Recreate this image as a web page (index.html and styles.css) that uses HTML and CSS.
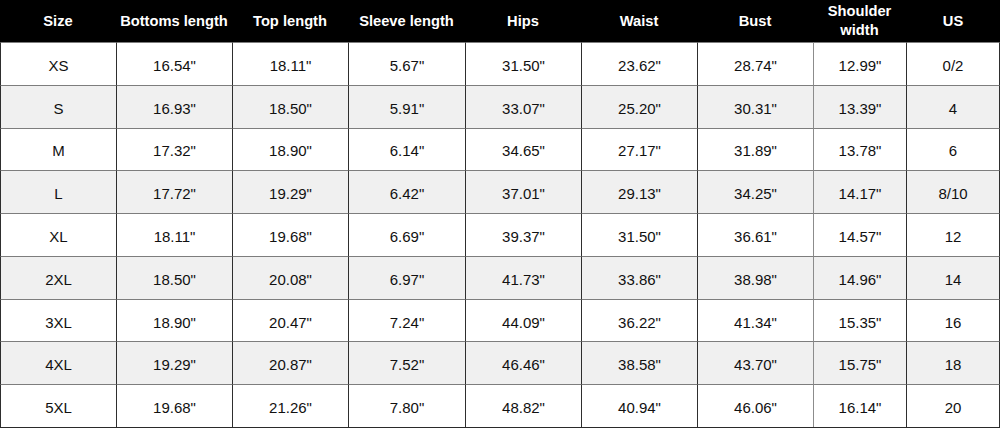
FILE: index.html
```html
<!DOCTYPE html>
<html>
<head>
<meta charset="utf-8">
<link rel="stylesheet" href="styles.css">
</head>
<body>
<div class="chart">
  <div class="hd">Size</div>
  <div class="hd">Bottoms length</div>
  <div class="hd">Top length</div>
  <div class="hd">Sleeve length</div>
  <div class="hd">Hips</div>
  <div class="hd">Waist</div>
  <div class="hd">Bust</div>
  <div class="hd two">Shoulder<br>width</div>
  <div class="hd">US</div>

  <div class="c">XS</div><div class="c">16.54"</div><div class="c">18.11"</div><div class="c">5.67"</div><div class="c">31.50"</div><div class="c">23.62"</div><div class="c">28.74"</div><div class="c g">12.99"</div><div class="c last">0/2</div>
  <div class="c alt">S</div><div class="c alt">16.93"</div><div class="c alt">18.50"</div><div class="c alt">5.91"</div><div class="c alt">33.07"</div><div class="c alt">25.20"</div><div class="c alt">30.31"</div><div class="c alt g">13.39"</div><div class="c alt last">4</div>
  <div class="c">M</div><div class="c">17.32"</div><div class="c">18.90"</div><div class="c">6.14"</div><div class="c">34.65"</div><div class="c">27.17"</div><div class="c">31.89"</div><div class="c g">13.78"</div><div class="c last">6</div>
  <div class="c alt">L</div><div class="c alt">17.72"</div><div class="c alt">19.29"</div><div class="c alt">6.42"</div><div class="c alt">37.01"</div><div class="c alt">29.13"</div><div class="c alt">34.25"</div><div class="c alt g">14.17"</div><div class="c alt last">8/10</div>
  <div class="c">XL</div><div class="c">18.11"</div><div class="c">19.68"</div><div class="c">6.69"</div><div class="c">39.37"</div><div class="c">31.50"</div><div class="c">36.61"</div><div class="c g">14.57"</div><div class="c last">12</div>
  <div class="c alt">2XL</div><div class="c alt">18.50"</div><div class="c alt">20.08"</div><div class="c alt">6.97"</div><div class="c alt">41.73"</div><div class="c alt">33.86"</div><div class="c alt">38.98"</div><div class="c alt g">14.96"</div><div class="c alt last">14</div>
  <div class="c">3XL</div><div class="c">18.90"</div><div class="c">20.47"</div><div class="c">7.24"</div><div class="c">44.09"</div><div class="c">36.22"</div><div class="c">41.34"</div><div class="c g">15.35"</div><div class="c last">16</div>
  <div class="c alt">4XL</div><div class="c alt">19.29"</div><div class="c alt">20.87"</div><div class="c alt">7.52"</div><div class="c alt">46.46"</div><div class="c alt">38.58"</div><div class="c alt">43.70"</div><div class="c alt g">15.75"</div><div class="c alt last">18</div>
  <div class="c">5XL</div><div class="c">19.68"</div><div class="c">21.26"</div><div class="c">7.80"</div><div class="c">48.82"</div><div class="c">40.94"</div><div class="c">46.06"</div><div class="c g">16.14"</div><div class="c last">20</div>
</div>
</body>
</html>
```

FILE: styles.css
```css
html, body {
  margin: 0;
  padding: 0;
  background: #ffffff;
}

.chart {
  width: 1000px;
  height: 428px;
  box-sizing: border-box;
  border-bottom: 1px solid #2a2a2a;
  display: grid;
  grid-template-columns: 116px 116px 116px 117px 116px 116px 116px 93px 94px;
  grid-template-rows: 42px repeat(9, 1fr);
  font-family: "Liberation Sans", Arial, sans-serif;
}

.hd {
  background: #000000;
  color: #ffffff;
  font-weight: bold;
  font-size: 14.7px;
  display: flex;
  align-items: center;
  justify-content: center;
  text-align: center;
  padding-bottom: 1px;
}

.hd.two {
  line-height: 19px;
  padding-bottom: 0;
}

.c {
  box-sizing: border-box;
  border-top: 1px solid #7d7d7d;
  border-left: 1px solid #2e2e2e;
  background: #ffffff;
  color: #111111;
  font-size: 15px;
  display: flex;
  align-items: center;
  justify-content: center;
  padding-top: 3px;
}

.c.alt {
  background: #f0f0f0;
}

.c.g {
  border-left-color: #8c8c8c;
}

.c.last {
  border-right: 1px solid #2e2e2e;
}
```
